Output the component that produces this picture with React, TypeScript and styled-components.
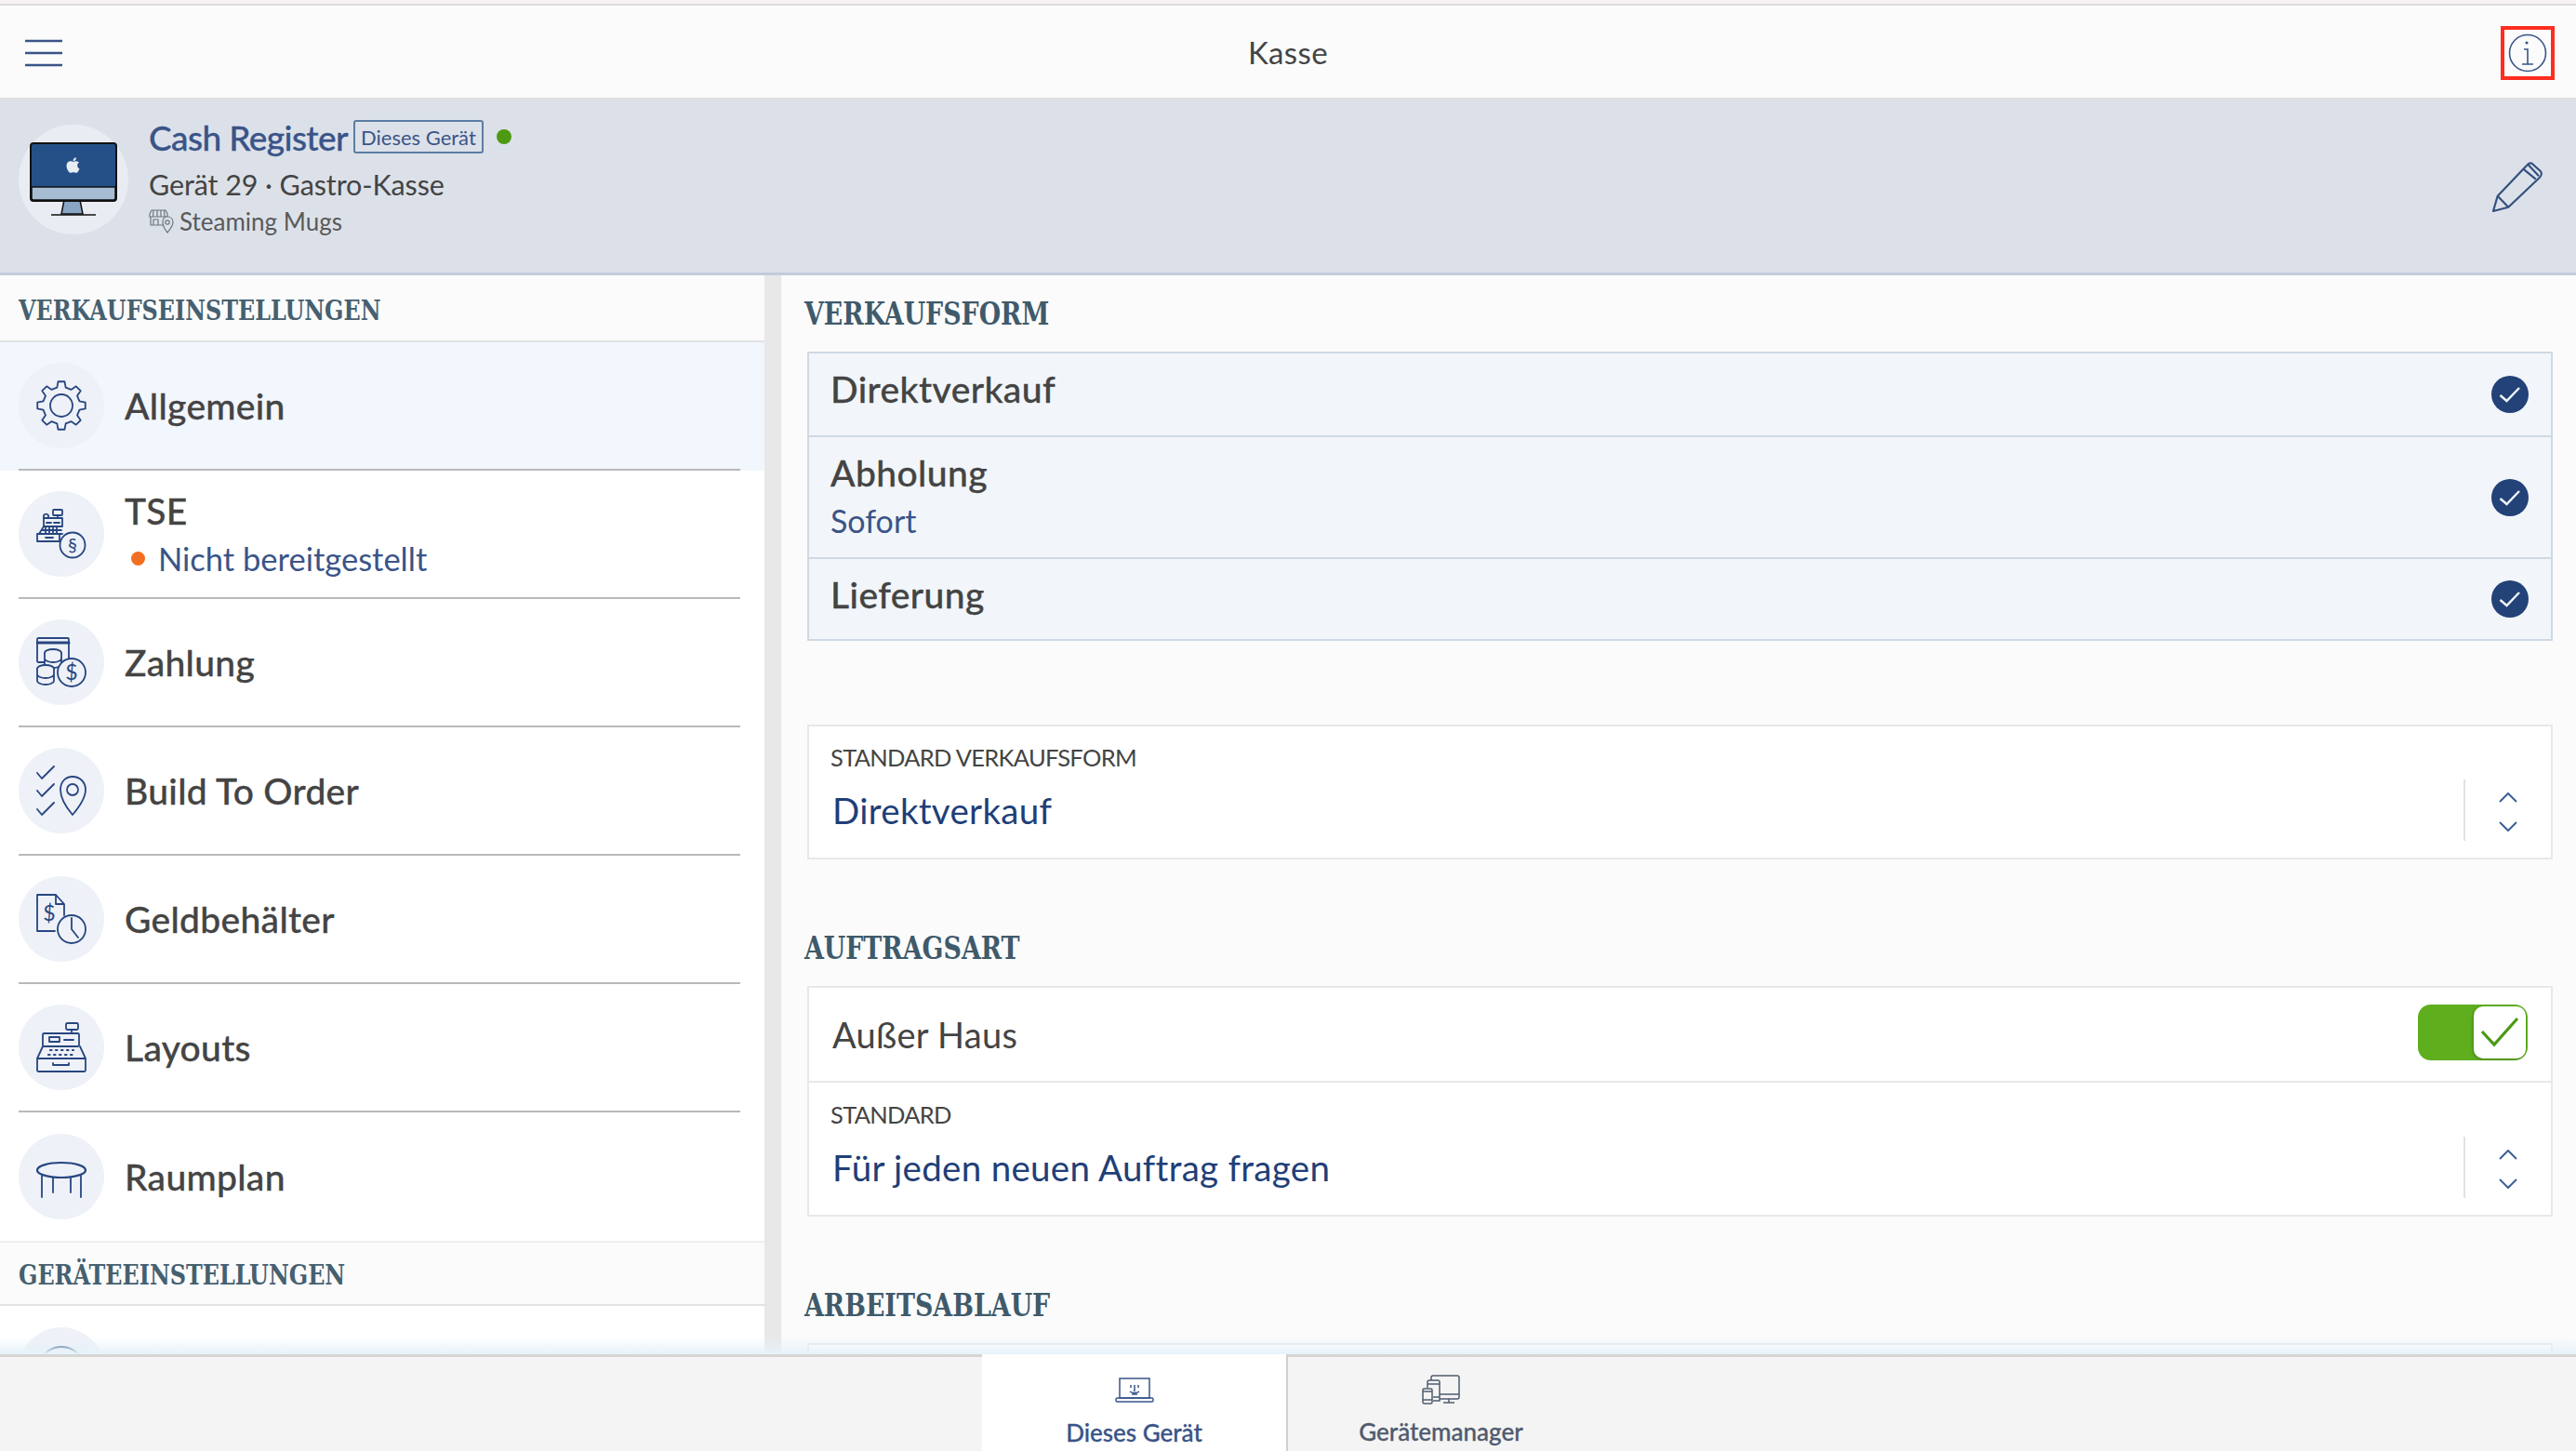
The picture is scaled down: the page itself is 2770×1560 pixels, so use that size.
import React from "react";
import styled, { createGlobalStyle } from "styled-components";
import { FaApple } from "react-icons/fa";

const SANS = `"Lato", "Liberation Sans", sans-serif`;
const SLAB = `"DejaVu Serif Condensed", "DejaVu Serif", "Liberation Serif", serif`;
const NAVY = "#274680";
const BLUE = "#3a5488";
const TEXT = "#444444";

const GlobalStyle = createGlobalStyle`
  html, body { margin: 0; padding: 0; background: #fbfbfb; }
  body { font-family: ${SANS}; color: ${TEXT}; }
  * { box-sizing: border-box; }
`;

const Page = styled.div`
  width: 2770px;
  height: 1560px;
  display: flex;
  flex-direction: column;
  overflow: hidden;
  background: #fbfbfb;
`;

const TopStrip = styled.div`
  height: 6px;
  flex: none;
  background: #f6f2f6;
  border-bottom: 2px solid #dddddd;
`;

const Header = styled.header`
  height: 101px;
  flex: none;
  display: grid;
  grid-template-columns: 1fr auto 1fr;
  align-items: center;
  padding: 3px 23px 0 27px;
  background: #fbfbfb;
  border-bottom: 2px solid #dedede;
`;

const Title = styled.div`
  margin: -3px 0 0 -4px;
  font-size: 33px;
  letter-spacing: 0.4px;
  color: ${TEXT};
`;

const InfoButton = styled.div`
  justify-self: end;
  width: 58px;
  height: 58px;
  border: 4px solid #ff2d20;
  display: flex;
  align-items: center;
  justify-content: center;
`;

const DeviceBand = styled.section`
  height: 189px;
  flex: none;
  display: flex;
  align-items: flex-start;
  padding: 21px 36px 0 20px;
  background: #dce1e9;
  border-bottom: 3px solid #c3ccd9;
`;

const Avatar = styled.div`
  width: 118px;
  height: 118px;
  margin-top: 6px;
  border-radius: 50%;
  background: #e9edf3;
  display: flex;
  align-items: center;
  justify-content: center;
  flex: none;
`;

const DeviceText = styled.div`
  margin-left: 22px;
  flex: 1;
  display: flex;
  flex-direction: column;
`;

const DeviceNameRow = styled.div`
  display: flex;
  align-items: center;
  height: 42px;
  margin-top: -2px;
`;

const DeviceName = styled.div`
  font-size: 37px;
  font-weight: 500;
  letter-spacing: -0.6px;
  -webkit-text-stroke: 0.3px ${BLUE};
  color: ${BLUE};
`;

const Badge = styled.div`
  margin-left: 6px;
  height: 36px;
  padding: 0 6px;
  display: flex;
  align-items: center;
  border: 2px solid #5c7ea3;
  border-radius: 3px;
  font-size: 22px;
  color: ${BLUE};
`;

const StatusDot = styled.span<{ $color: string; $size: number }>`
  display: block;
  flex: none;
  width: ${(p) => p.$size}px;
  height: ${(p) => p.$size}px;
  border-radius: 50%;
  background: ${(p) => p.$color};
`;

const OnlineDot = styled(StatusDot)`
  margin-left: 14px;
`;

const DeviceType = styled.div`
  margin-top: 10px;
  font-size: 30.5px;
  line-height: 40px;
  letter-spacing: -0.1px;
  color: ${TEXT};
`;

const StoreRow = styled.div`
  margin-top: 3px;
  display: flex;
  align-items: center;
  gap: 6px;
  font-size: 26px;
  line-height: 34px;
  color: #5a5a5a;
`;

const EditIcon = styled.div`
  margin-top: 45px;
  flex: none;
`;

const Main = styled.main`
  flex: 1;
  min-height: 0;
  display: flex;
  position: relative;
  overflow: hidden;
`;

const Sidebar = styled.nav`
  width: 822px;
  flex: none;
  background: #ffffff;
`;

const Gutter = styled.div`
  width: 18px;
  flex: none;
  background: #e8e8e8;
`;

const SideHeading = styled.div<{ $top?: boolean }>`
  height: ${(p) => (p.$top ? 70 : 72)}px;
  display: flex;
  align-items: center;
  padding: ${(p) => (p.$top ? 3 : 5)}px 0 0 20px;
  background: #fbfbfb;
  border-top: ${(p) => (p.$top ? "2px solid #eeeeee" : "none")};
  border-bottom: 2px solid #e2e2e2;
  font-family: ${SLAB};
  font-weight: 700;
  font-size: 30px;
  color: #456070;
`;

// the slab faces on hand run wider than the reference, so the caps are squeezed a little
const Squeezed = styled.span<{ $x: number }>`
  display: inline-block;
  white-space: nowrap;
  transform: scaleX(${(p) => p.$x});
  transform-origin: left center;
`;

const MenuRow = styled.div<{ $active?: boolean }>`
  padding: 0 26px 0 20px;
  background: ${(p) => (p.$active ? "#f2f6fd" : "#ffffff")};
`;

const MenuInner = styled.div<{ $last?: boolean }>`
  height: 138px;
  display: flex;
  align-items: center;
  gap: 22px;
  border-bottom: ${(p) => (p.$last ? "none" : "2px solid #b9b9b9")};
`;

const IconCircle = styled.div`
  width: 92px;
  height: 92px;
  flex: none;
  border-radius: 50%;
  background: #eef1f7;
  display: flex;
  align-items: center;
  justify-content: center;
`;

const MenuLabel = styled.div`
  font-size: 39px;
  font-weight: 500;
  letter-spacing: 0.3px;
  -webkit-text-stroke: 0.3px ${TEXT};
  color: ${TEXT};
`;

const MenuStack = styled.div`
  display: flex;
  flex-direction: column;
  gap: 7px;
`;

const MenuStatus = styled.div`
  display: flex;
  align-items: center;
  gap: 14px;
  padding-left: 7px;
  font-size: 34.5px;
  line-height: 44px;
  color: ${BLUE};
`;

const Content = styled.div`
  flex: 1;
  min-width: 0;
  padding: 0 25px 0 28px;
  background: #fbfbfb;
`;

const SectionTitle = styled.h2<{ $spaced?: boolean }>`
  margin: ${(p) => (p.$spaced ? "54px" : "0")} 0 0 -3px;
  height: 82px;
  display: flex;
  align-items: center;
  font-family: ${SLAB};
  font-weight: 700;
  font-size: 33px;
  color: #3f5a6b;
`;

const Group = styled.div<{ $tone: "blue" | "white" }>`
  border: 2px solid ${(p) => (p.$tone === "blue" ? "#cfd9e5" : "#e8e8e8")};
  background: ${(p) => (p.$tone === "blue" ? "#f2f6fa" : "#ffffff")};
`;

const SpacedGroup = styled(Group)`
  margin-top: 90px;
`;

const ChoiceRow = styled.div<{ $height: number }>`
  height: ${(p) => p.$height}px;
  display: flex;
  align-items: center;
  justify-content: space-between;
  padding: 0 24px 0 23px;
  & + & {
    border-top: 2px solid #cfd9e5;
  }
`;

const ChoiceText = styled.div`
  display: flex;
  flex-direction: column;
  align-self: flex-start;
  padding-top: 13px;
`;

const ChoiceLabel = styled.div`
  font-size: 39px;
  line-height: 50px;
  font-weight: 500;
  letter-spacing: 0.4px;
  -webkit-text-stroke: 0.3px ${TEXT};
  color: ${TEXT};
`;

const ChoiceSub = styled.div`
  margin-top: 5px;
  font-size: 34px;
  line-height: 44px;
  color: ${BLUE};
`;

const Check = styled.div`
  width: 40px;
  height: 40px;
  border-radius: 50%;
  background: #224278;
  display: flex;
  align-items: center;
  justify-content: center;
  flex: none;
`;

const SelectRow = styled.div<{ $divided?: boolean }>`
  height: ${(p) => (p.$divided ? 144 : 141)}px;
  display: flex;
  align-items: flex-end;
  padding: 0 0 18px 23px;
  border-top: ${(p) => (p.$divided ? "2px solid #e8e8e8" : "none")};
`;

const SelectText = styled.div`
  flex: 1;
  display: flex;
  flex-direction: column;
  padding-bottom: 8px;
`;

const SelectLabel = styled.div`
  font-size: 25.5px;
  line-height: 34px;
  letter-spacing: -0.7px;
  color: ${TEXT};
`;

const SelectValue = styled.div`
  margin: 15px 0 0 2px;
  font-size: 38.5px;
  line-height: 50px;
  letter-spacing: 0.3px;
  color: #1f3f78;
`;

const Stepper = styled.div`
  width: 94px;
  height: 66px;
  flex: none;
  padding-top: 4px;
  border-left: 2px solid #e2e2e2;
  display: flex;
  align-items: center;
  justify-content: center;
`;

const ToggleRow = styled.div`
  height: 100px;
  display: flex;
  align-items: center;
  justify-content: space-between;
  padding: 0 25px 0 25px;
`;

const ToggleLabel = styled.div`
  font-size: 38px;
  letter-spacing: 0.3px;
  color: ${TEXT};
`;

const Toggle = styled.div`
  width: 118px;
  height: 60px;
  margin-top: -4px;
  border-radius: 14px;
  background: #5fae1e;
  display: flex;
  justify-content: flex-end;
  padding: 2px;
`;

const ToggleKnob = styled.div`
  width: 56px;
  height: 56px;
  border-radius: 10px;
  background: #ffffff;
  box-shadow: -1px 1px 3px rgba(0, 0, 0, 0.25);
  display: flex;
  align-items: center;
  justify-content: center;
`;

const Fade = styled.div`
  position: absolute;
  left: 0;
  right: 0;
  bottom: 0;
  height: 18px;
  background: linear-gradient(rgba(228, 242, 250, 0), #e6f2f9);
  pointer-events: none;
`;

const Footer = styled.footer`
  height: 104px;
  flex: none;
  display: flex;
  justify-content: center;
  background: #f4f4f4;
  border-top: 3px solid #d6d6d6;
`;

const Tab = styled.div<{ $active?: boolean }>`
  width: 329px;
  margin-top: ${(p) => (p.$active ? "-3px" : "0")};
  display: flex;
  flex-direction: column;
  align-items: center;
  padding-top: ${(p) => (p.$active ? "25px" : "19px")};
  gap: ${(p) => (p.$active ? "14px" : "12px")};
  background: ${(p) => (p.$active ? "#ffffff" : "transparent")};
  border-right: ${(p) => (p.$active ? "2px solid #d0d0d0" : "none")};
  font-size: 26px;
  font-weight: 500;
  line-height: 34px;
  -webkit-text-stroke: 0.3px currentColor;
  color: ${(p) => (p.$active ? BLUE : "#4f5b6e")};
`;

const HamburgerIcon = () => (
  <svg width="40" height="30" viewBox="0 0 40 30">
    <path d="M0 2h40M0 15h40M0 28h40" stroke="#3a5488" strokeWidth="2.6" fill="none" />
  </svg>
);

const InfoIcon = () => (
  <svg width="42" height="42" viewBox="0 0 42 42" fill="none" stroke={BLUE} strokeWidth="1.6">
    <circle cx="21" cy="21" r="19.5" />
    <circle cx="20" cy="10" r="1.6" fill={BLUE} stroke="none" />
    <path d="M17 17h4v16M15 33h12" />
  </svg>
);

const PencilIcon = () => (
  <svg width="54" height="56" viewBox="0 0 54 56" fill="none" stroke="#34507f" strokeWidth="2.2" strokeLinejoin="round">
    <path d="M1 54 5.7 37.7 36.7 5.3c2-2.6 4.3-3.6 6.5-2.1l8.3 7.6c2 2 1.600 4.800-.5 6.900L17.300 49.700Z" />
    <path d="M5.700 37.700 17.300 49.700M33.300 8.700 46.700 19.700M38.300 3.700 50 16.300" />
  </svg>
);

const MonitorIcon = () => (
  <svg width="94" height="80" viewBox="0 0 94 80">
    <path d="M37 62h17l3 15H34Z" fill="#88a6c4" stroke="#111" strokeWidth="1.5" />
    <path d="M23 78h48" stroke="#111" strokeWidth="1.500" />
    <rect x="1" y="1" width="92" height="62" rx="3" fill="#255087" stroke="#111" strokeWidth="2" />
    <path d="M2 48h90v12a2 2 0 0 1-2 2H4a2 2 0 0 1-2-2Z" fill="#a6bdd4" stroke="#111" strokeWidth="1.500" />
    <FaApple x="37" y="15" size="19" color="#e9edf3" />
  </svg>
);

const StorePinIcon = () => (
  <svg width="27" height="26" viewBox="0 0 27 26" fill="none" stroke="#6f7680" strokeWidth="1.2">
    <path d="M1 5 3 1h15l2 4v3H1ZM5 1 4.500 8M9 1v7M13 1v7M16.500 1l.5 7" />
    <path d="M2 8v9h13M5 11h5v6H5Z" />
    <path d="M20 8c3.600 0 6 2.500 6 6 0 4-3.500 8-6 11-2.500-3-5-7-5-11 0-3.500 1.500-6 5-6Z" fill="#dce1e9" />
    <circle cx="20" cy="14" r="2.200" />
  </svg>
);

// gear outline with eight teeth, computed so the teeth stay evenly spaced
const gearPath = (cx: number, cy: number, outer: number, inner: number, teeth: number) => {
  const pts: string[] = [];
  const step = (Math.PI * 2) / teeth;
  for (let i = 0; i < teeth; i++) {
    const a = i * step - Math.PI / 2;
    [
      [inner, a - step * 0.3],
      [outer, a - step * 0.17],
      [outer, a + step * 0.17],
      [inner, a + step * 0.3],
    ].forEach(([r, t]) => {
      pts.push(`${(cx + r * Math.cos(t)).toFixed(2)} ${(cy + r * Math.sin(t)).toFixed(2)}`);
    });
  }
  return `M${pts.join("L")}Z`;
};

const Ico = ({ children }: { children: React.ReactNode }) => (
  <svg width="54" height="54" viewBox="0 0 54 54" fill="none" stroke={NAVY} strokeWidth="1.800" strokeLinejoin="round" strokeLinecap="round">
    {children}
  </svg>
);

const GearIcon = () => (
  <Ico>
    <path d={gearPath(27, 27, 26, 20, 8)} />
    <circle cx="27" cy="27" r="12" />
  </Ico>
);

const TseIcon = () => (
  <Ico>
    <rect x="18" y="1" width="10" height="6" rx="1" />
    <path d="M23 7v3M8 10v-3a3 3 0 0 1 5 0v3" />
    <rect x="8" y="10" width="20" height="9" />
    <path d="M11 15h5M19 15h6" />
    <path d="M8 19 3 27h25M6 23h21M10 20v6M14 20v6M18 20v6M22 20v6" />
    <path d="M1 27h24v8H1ZM10 31h8" />
    <circle cx="39" cy="39" r="13.500" fill="#eef1f7" />
    <text x="39" y="46" textAnchor="middle" fontFamily={SANS} fontSize="20" fill={NAVY} stroke="none">§</text>
  </Ico>
);

const PayIcon = () => (
  <Ico>
    <rect x="1" y="1" width="34" height="26" rx="1.500" />
    <path d="M1 6h34" strokeWidth="3" />
    <ellipse cx="18" cy="17" rx="9" ry="4" fill="#eef1f7" />
    <path d="M9 17v12c0 2 4 4 9 4s9-2 9-4V17M9 23c0 2 4 4 9 4s9-2 9-4" fill="#eef1f7" />
    <ellipse cx="10" cy="34" rx="9" ry="4" fill="#eef1f7" />
    <path d="M1 34v13c0 2 4 4 9 4s9-2 9-4V34M1 40c0 2 4 4 9 4s9-2 9-4" fill="#eef1f7" />
    <circle cx="38" cy="38" r="15" fill="#eef1f7" />
    <text x="38" y="46" textAnchor="middle" fontFamily={SANS} fontSize="23" fill={NAVY} stroke="none">$</text>
  </Ico>
);

const OrderIcon = () => (
  <Ico>
    <path d="M1 8 6 14 19 1M1 27 6 33 19 20M1 47 6 53 19 40" />
    <path d="M39 12c8 0 14 6 14 14 0 10-8 20-14 27-6-7-13-17-13-27 0-8 5-14 13-14Z" />
    <circle cx="39" cy="26" r="6" />
  </Ico>
);

const DrawerIcon = () => (
  <Ico>
    <path d="M20 40H1V1h20l9 10v12M21 1v10h9" />
    <text x="14" y="29" textAnchor="middle" fontFamily={SANS} fontSize="23" fill={NAVY} stroke="none">$</text>
    <circle cx="38" cy="38" r="15" fill="#eef1f7" />
    <path d="M38 26v12l7 9" />
  </Ico>
);

const LayoutIcon = () => (
  <Ico>
    <rect x="32" y="1" width="13" height="7" rx="1.500" />
    <path d="M38 8v4" />
    <rect x="7" y="12" width="39" height="14" rx="1.500" />
    <rect x="14" y="16" width="11" height="5" />
    <path d="M30 19h10" />
    <path d="M7 26 1 39h52l-6-13" />
    <path d="M15 30h25M13 35h29" strokeDasharray="1.500 4.500" strokeWidth="2.200" />
    <rect x="1" y="39" width="52" height="14" rx="1.500" />
    <path d="M18 44v2h17v-2" />
  </Ico>
);

const TableIcon = () => (
  <Ico>
    <ellipse cx="27" cy="20" rx="26" ry="8" strokeWidth="2.200" />
    <path d="M6 26v23M48 26v23M18 28v16M37 28v16" />
  </Ico>
);

const PlainIcon = () => (
  <Ico>
    <circle cx="27" cy="27" r="25" />
  </Ico>
);

const CheckIcon = () => (
  <svg width="24" height="20" viewBox="0 0 24 20" fill="none" stroke="#f2f6fa" strokeWidth="2.400">
    <path d="M1.500 11 8.500 17 22 3" />
  </svg>
);

const StepperIcon = () => (
  <svg width="20" height="42" viewBox="0 0 20 42" fill="none" stroke="#3a6098" strokeWidth="2">
    <path d="M1 10 10 1l9 9M1 32l9 9 9-9" />
  </svg>
);

const ToggleCheckIcon = () => (
  <svg width="42" height="34" viewBox="0 0 42 34" fill="none" stroke="#4a9a15" strokeWidth="3.200">
    <path d="M2 16 15 30 40 2" />
  </svg>
);

const LaptopIcon = () => (
  <svg width="42" height="28" viewBox="0 0 42 28" fill="none" stroke={BLUE} strokeWidth="1.500">
    <rect x="5" y="1" width="32" height="21" />
    <rect x="1" y="22" width="40" height="4" rx="1.500" />
    <path d="M17 8v3M25 8v3M21 8v6h-1M16 15c2 2 8 2 10 0M18 18h6" />
  </svg>
);

const DevicesIcon = () => (
  <svg width="42" height="32" viewBox="0 0 42 32" fill="none" stroke="#4f5b6e" strokeWidth="1.500">
    <path d="M10 6V3a2 2 0 0 1 2-2h26a2 2 0 0 1 2 2v21a2 2 0 0 1-2 2H19M19 21h21M29 26v4M23 30h12" />
    <path d="M6 14V8a2 2 0 0 1 2-2h9a2 2 0 0 1 2 2v20H12M6 10h13M12 24h7" />
    <rect x="1" y="15" width="10" height="16" rx="1.500" />
    <path d="M1 18h10M1 27h10" />
  </svg>
);

const SelectField = ({ label, value, divided }: { label: string; value: string; divided?: boolean }) => (
  <SelectRow $divided={divided}>
    <SelectText>
      <SelectLabel>{label}</SelectLabel>
      <SelectValue>{value}</SelectValue>
    </SelectText>
    <Stepper>
      <StepperIcon />
    </Stepper>
  </SelectRow>
);

const menu = [
  { label: "Zahlung", icon: <PayIcon /> },
  { label: "Build To Order", icon: <OrderIcon /> },
  { label: "Geldbehälter", icon: <DrawerIcon /> },
  { label: "Layouts", icon: <LayoutIcon /> },
];

export default function App() {
  return (
    <Page>
      <GlobalStyle />
      <TopStrip />
      <Header>
        <HamburgerIcon />
        <Title>Kasse</Title>
        <InfoButton>
          <InfoIcon />
        </InfoButton>
      </Header>
      <DeviceBand>
        <Avatar>
          <MonitorIcon />
        </Avatar>
        <DeviceText>
          <DeviceNameRow>
            <DeviceName>Cash Register</DeviceName>
            <Badge>Dieses Gerät</Badge>
            <OnlineDot $color="#4c9a12" $size={16} />
          </DeviceNameRow>
          <DeviceType>Gerät 29 · Gastro-Kasse</DeviceType>
          <StoreRow>
            <StorePinIcon />
            Steaming Mugs
          </StoreRow>
        </DeviceText>
        <EditIcon>
          <PencilIcon />
        </EditIcon>
      </DeviceBand>
      <Main>
        <Sidebar>
          <SideHeading>
            <Squeezed $x={0.885}>VERKAUFSEINSTELLUNGEN</Squeezed>
          </SideHeading>
          <MenuRow $active>
            <MenuInner>
              <IconCircle>
                <GearIcon />
              </IconCircle>
              <MenuLabel>Allgemein</MenuLabel>
            </MenuInner>
          </MenuRow>
          <MenuRow>
            <MenuInner>
              <IconCircle>
                <TseIcon />
              </IconCircle>
              <MenuStack>
                <MenuLabel>TSE</MenuLabel>
                <MenuStatus>
                  <StatusDot $color="#f26f21" $size={15} />
                  Nicht bereitgestellt
                </MenuStatus>
              </MenuStack>
            </MenuInner>
          </MenuRow>
          {menu.map((item) => (
            <MenuRow key={item.label}>
              <MenuInner>
                <IconCircle>{item.icon}</IconCircle>
                <MenuLabel>{item.label}</MenuLabel>
              </MenuInner>
            </MenuRow>
          ))}
          <MenuRow>
            <MenuInner $last>
              <IconCircle>
                <TableIcon />
              </IconCircle>
              <MenuLabel>Raumplan</MenuLabel>
            </MenuInner>
          </MenuRow>
          <SideHeading $top>
            <Squeezed $x={0.885}>GERÄTEEINSTELLUNGEN</Squeezed>
          </SideHeading>
          <MenuRow>
            <MenuInner $last>
              <IconCircle>
                <PlainIcon />
              </IconCircle>
            </MenuInner>
          </MenuRow>
        </Sidebar>
        <Gutter />
        <Content>
          <SectionTitle>
            <Squeezed $x={0.905}>VERKAUFSFORM</Squeezed>
          </SectionTitle>
          <Group $tone="blue">
            <ChoiceRow $height={88}>
              <ChoiceText>
                <ChoiceLabel>Direktverkauf</ChoiceLabel>
              </ChoiceText>
              <Check>
                <CheckIcon />
              </Check>
            </ChoiceRow>
            <ChoiceRow $height={131}>
              <ChoiceText>
                <ChoiceLabel>Abholung</ChoiceLabel>
                <ChoiceSub>Sofort</ChoiceSub>
              </ChoiceText>
              <Check>
                <CheckIcon />
              </Check>
            </ChoiceRow>
            <ChoiceRow $height={88}>
              <ChoiceText>
                <ChoiceLabel>Lieferung</ChoiceLabel>
              </ChoiceText>
              <Check>
                <CheckIcon />
              </Check>
            </ChoiceRow>
          </Group>
          <SpacedGroup $tone="white">
            <SelectField label="STANDARD VERKAUFSFORM" value="Direktverkauf" />
          </SpacedGroup>
          <SectionTitle $spaced>
            <Squeezed $x={0.905}>AUFTRAGSART</Squeezed>
          </SectionTitle>
          <Group $tone="white">
            <ToggleRow>
              <ToggleLabel>Außer Haus</ToggleLabel>
              <Toggle>
                <ToggleKnob>
                  <ToggleCheckIcon />
                </ToggleKnob>
              </Toggle>
            </ToggleRow>
            <SelectField label="STANDARD" value="Für jeden neuen Auftrag fragen" divided />
          </Group>
          <SectionTitle $spaced>
            <Squeezed $x={0.905}>ARBEITSABLAUF</Squeezed>
          </SectionTitle>
          <Group $tone="white">
            <ToggleRow />
          </Group>
        </Content>
        <Fade />
      </Main>
      <Footer>
        <Tab $active>
          <LaptopIcon />
          Dieses Gerät
        </Tab>
        <Tab>
          <DevicesIcon />
          Gerätemanager
        </Tab>
      </Footer>
    </Page>
  );
}
